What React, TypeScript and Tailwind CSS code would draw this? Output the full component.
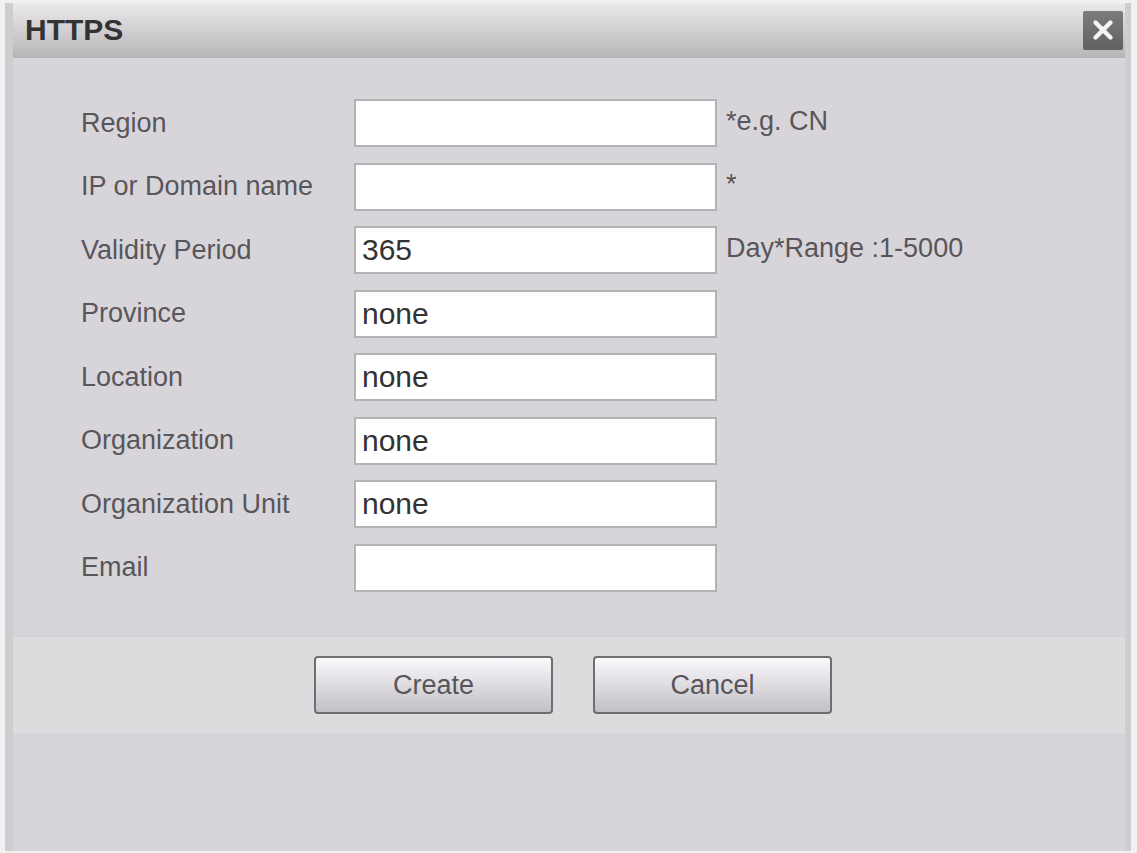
import { X } from 'lucide-react';

const FIELDS = [
  { label: 'Region', value: '', hint: '*e.g. CN' },
  { label: 'IP or Domain name', value: '', hint: '*' },
  { label: 'Validity Period', value: '365', hint: 'Day*Range :1-5000' },
  { label: 'Province', value: 'none', hint: '' },
  { label: 'Location', value: 'none', hint: '' },
  { label: 'Organization', value: 'none', hint: '' },
  { label: 'Organization Unit', value: 'none', hint: '' },
  { label: 'Email', value: '', hint: '' },
];

const font = { fontFamily: '"Liberation Sans", Arial, sans-serif' };

export default function App() {
  return (
    <div className="h-[853px] w-[1137px] overflow-hidden bg-[#f1f0f2] pl-[5px] pt-[3px]" style={font}>
      <div className="flex h-[848px] w-[1126px] flex-col border-l-[8px] border-r-[6px] border-[#d0cdd1] bg-[#d8d5da]">
        {/* Title bar */}
        <div className="flex h-[55px] shrink-0 items-center justify-between border-b border-[#b3b0b4] bg-gradient-to-b from-[#ebe9ec] to-[#b9b6ba] pl-[12px] pr-[2px]">
          <span className="text-[30px] font-bold leading-none text-[#333]">HTTPS</span>
          <button className="flex h-[39px] w-[40px] items-center justify-center rounded-[2px] bg-gradient-to-b from-[#7d7b7e] to-[#626063]">
            <X className="h-[30px] w-[30px] text-[#f4f4f4]" strokeWidth={3.5} />
          </button>
        </div>

        {/* Form */}
        <div className="flex flex-col gap-[15.5px] pt-[41px]">
          {FIELDS.map((f) => (
            <div key={f.label} className="flex h-[48px] items-center">
              <span className="block w-[341px] shrink-0 pl-[68px] text-[27px] leading-none text-[#58565a]">{f.label}</span>
              <input
                readOnly
                value={f.value}
                className="h-[48px] w-[363px] shrink-0 border-2 border-[#b5b2b6] bg-white pl-[6px] pr-[8px] text-[30px] leading-none text-[#333] outline-none"
              />
              {f.hint && (
                <span className="-mt-[4px] pl-[9px] text-[27px] leading-none text-[#58565a]">{f.hint}</span>
              )}
            </div>
          ))}
        </div>

        {/* Button band */}
        <div className="mt-[44px] flex h-[98px] items-center justify-center gap-[40px] border-t border-[#d3d0d4] bg-[#dedbdf] pl-[8px]">
          <button className="h-[58px] w-[239px] rounded-[4px] border-2 border-[#6f6d70] bg-gradient-to-b from-[#fbf9fc] to-[#c3c0c5] text-[27px] text-[#58565a]">
            Create
          </button>
          <button className="h-[58px] w-[239px] rounded-[4px] border-2 border-[#6f6d70] bg-gradient-to-b from-[#fbf9fc] to-[#c3c0c5] text-[27px] text-[#58565a]">
            Cancel
          </button>
        </div>

        <div className="flex-1 border-t border-[#d3d0d4]" />
      </div>
    </div>
  );
}
